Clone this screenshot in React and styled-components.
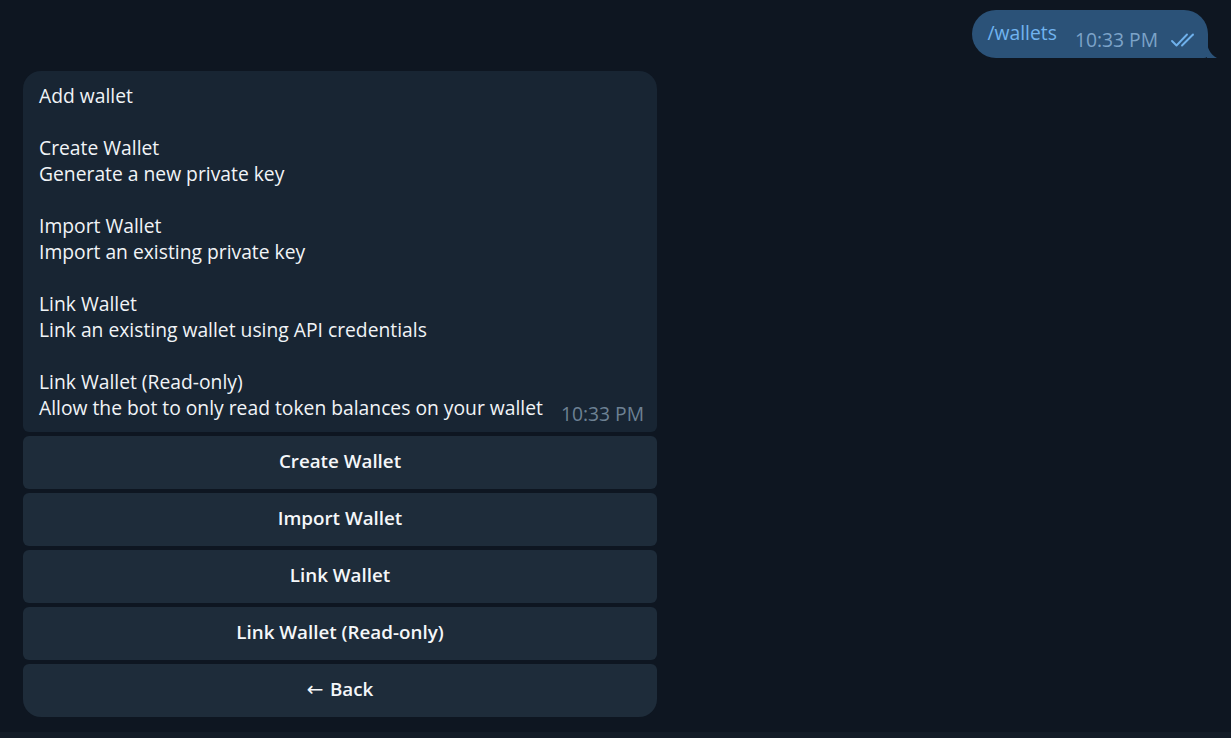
import React from "react";
import styled, { createGlobalStyle } from "styled-components";

const GlobalStyle = createGlobalStyle`
  html, body {
    margin: 0;
    padding: 0;
    background: #0e1621;
  }
  body {
    font-family: "Open Sans", "Noto Sans", sans-serif;
  }
`;

const Page = styled.div`
  width: 1231px;
  height: 738px;
  box-sizing: border-box;
  background: #0e1621;
  display: flex;
  flex-direction: column;
  overflow: hidden;
`;

const Feed = styled.div`
  flex: 1;
  display: flex;
  flex-direction: column;
  padding: 10px 13px 0 23px;
`;

const Footer = styled.div`
  height: 6px;
  background: #131c27;
`;

const OutRow = styled.div`
  display: flex;
  justify-content: flex-end;
`;

const OutBubble = styled.div`
  position: relative;
  height: 48px;
  box-sizing: border-box;
  padding: 0 8px 0 16px;
  margin-right: 10px;
  background: #2b5278;
  border-radius: 24px 24px 4px 24px;
  display: flex;
  align-items: center;
  gap: 18px;
`;

const Tail = styled.svg`
  position: absolute;
  right: -10px;
  bottom: 0;
`;

const Command = styled.span`
  color: #71b4f0;
  font-size: 19.3px;
  margin-top: -3px;
`;

const OutMeta = styled.span`
  display: flex;
  align-items: center;
  gap: 12px;
  color: #7ca3c8;
  font-size: 19.3px;
  margin-top: 11px;
`;

const Keyboard = styled.div`
  width: 634px;
  margin-top: 13px;
  display: flex;
  flex-direction: column;
  gap: 4px;
`;

const InBubble = styled.div`
  background: #182533;
  border-radius: 18px 18px 6px 6px;
  padding: 12px 13px 11px 16px;
  color: #f1f4f7;
  font-size: 19.3px;
  line-height: 26px;
  position: relative;
`;

const Line = styled.div`
  min-height: 26px;
  white-space: pre;
`;

const InTime = styled.span`
  position: absolute;
  right: 13px;
  bottom: 5px;
  color: #6d8193;
  font-size: 19.3px;
`;

const KeyButton = styled.button`
  height: 53px;
  border: none;
  background: #1e2c3a;
  color: #f5f7f9;
  font-family: "Open Sans", "Noto Sans", sans-serif;
  font-weight: 600;
  font-size: 18.8px;
  border-radius: ${(p) => (p.$last ? "6px 6px 18px 18px" : "6px")};
  cursor: pointer;
  padding: 0 0 3px;
`;

const Arrow = styled.span`
  font-family: "DejaVu Sans", sans-serif;
  font-weight: 400;
  font-size: 20px;
`;

const lines = [
  "Add wallet",
  "",
  "Create Wallet",
  "Generate a new private key",
  "",
  "Import Wallet",
  "Import an existing private key",
  "",
  "Link Wallet",
  "Link an existing wallet using API credentials",
  "",
  "Link Wallet (Read-only)",
  "Allow the bot to only read token balances on your wallet",
];

const buttons = [
  { label: "Create Wallet" },
  { label: "Import Wallet" },
  { label: "Link Wallet" },
  { label: "Link Wallet (Read-only)" },
  { label: "Back", arrow: true },
];

const Checks = () => (
  <svg width="30" height="16" viewBox="0 0 30 16" fill="none">
    <path d="M2 9 L6.5 13.5 L17 2.5" stroke="#6fb1ec" strokeWidth="1.9" strokeLinecap="round" strokeLinejoin="round" />
    <path d="M12 13.5 L23 2.5" stroke="#6fb1ec" strokeWidth="1.9" strokeLinecap="round" />
  </svg>
);

const App = () => (
  <Page>
    <GlobalStyle />
    <Feed>
      <OutRow>
        <OutBubble>
          <Command>/wallets</Command>
          <OutMeta>
            10:33 PM
            <Checks />
          </OutMeta>
          <Tail width="11" height="18" viewBox="0 0 11 18">
            <path d="M0 0 C0 8 3 14 10 18 L0 18 Z" fill="#2b5278" />
          </Tail>
        </OutBubble>
      </OutRow>
      <Keyboard>
        <InBubble>
          {lines.map((l, i) => (
            <Line key={i}>{l}</Line>
          ))}
          <InTime>10:33 PM</InTime>
        </InBubble>
        {buttons.map((b, i) => (
          <KeyButton key={b.label} $last={i === buttons.length - 1}>
            {b.arrow && <Arrow>{"\u2190"} </Arrow>}
            {b.label}
          </KeyButton>
        ))}
      </Keyboard>
    </Feed>
    <Footer />
  </Page>
);

export default App;
